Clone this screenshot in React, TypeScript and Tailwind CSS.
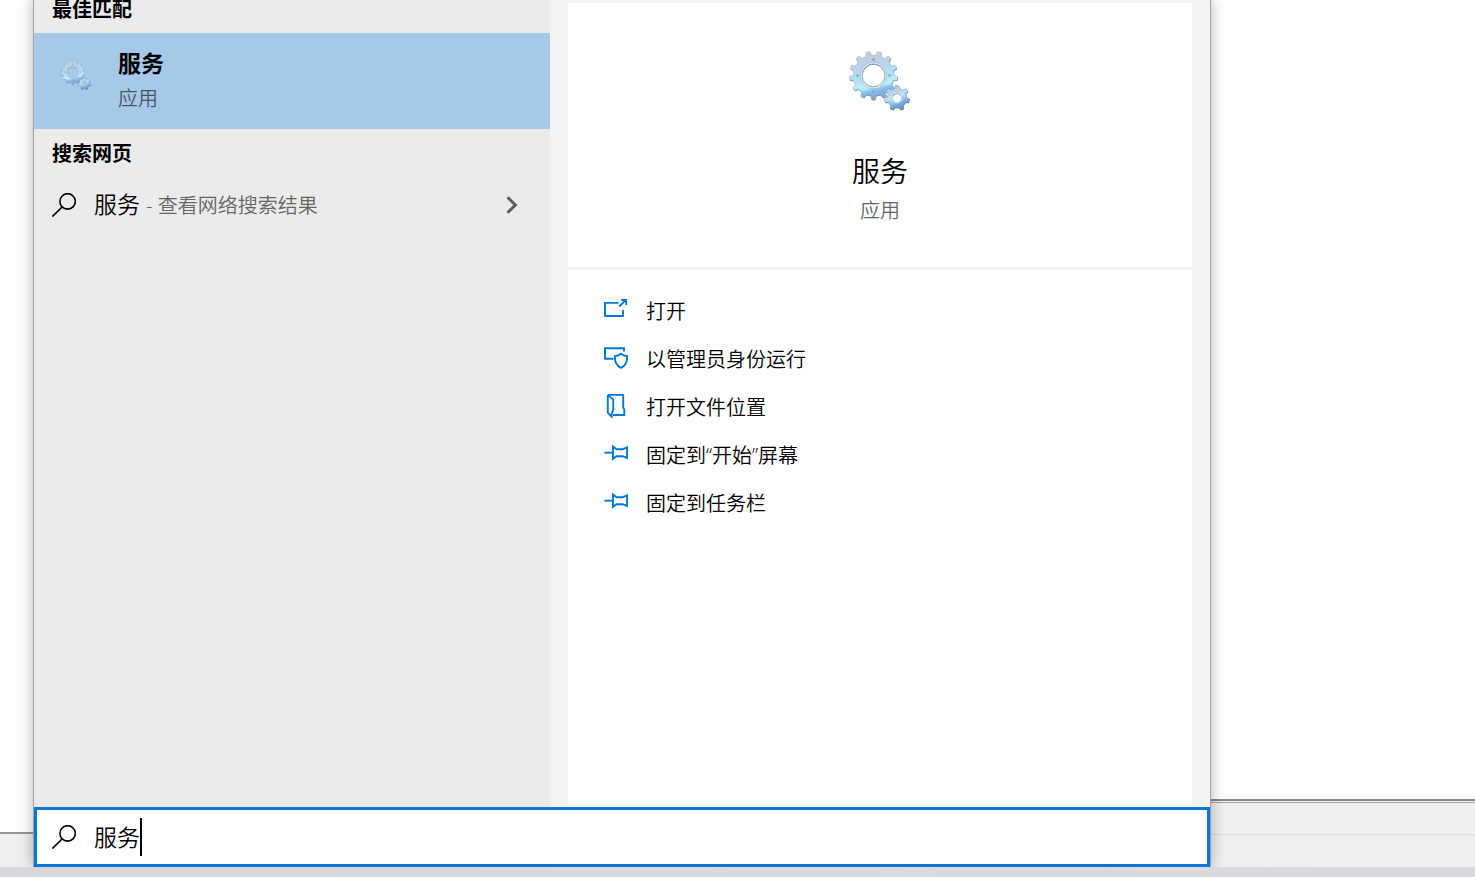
import React from "react";

type Gear = { cx: number; cy: number; outer: number; root: number; hole: number; teeth: number; turn: number };

function gearPath({ cx, cy, outer, root, hole, teeth, turn }: Gear): string {
  const step = (Math.PI * 2) / teeth;
  const at = (r: number, a: number) =>
    `${(cx + r * Math.cos(a)).toFixed(2)} ${(cy + r * Math.sin(a)).toFixed(2)}`;
  let d = "";
  for (let i = 0; i < teeth; i++) {
    const a = i * step + turn;
    d += `${i === 0 ? "M" : "L"}${at(root, a - step * 0.28)}L${at(outer, a - step * 0.16)}`;
    d += `A${outer} ${outer} 0 0 1 ${at(outer, a + step * 0.16)}L${at(root, a + step * 0.28)}`;
  }
  d += `ZM${cx + hole} ${cy}A${hole} ${hole} 0 1 0 ${cx - hole} ${cy}A${hole} ${hole} 0 1 0 ${cx + hole} ${cy}Z`;
  return d;
}

const bigGear = gearPath({ cx: 25.5, cy: 26.4, outer: 24.2, root: 20.4, hole: 11.4, teeth: 13, turn: Math.PI / 2 });
const smallGear = gearPath({ cx: 49, cy: 48.8, outer: 12.6, root: 9.8, hole: 4.6, teeth: 7, turn: -Math.PI / 2 });

function ServicesIcon({ id, className }: { id: string; className: string }) {
  return (
    <svg viewBox="0 0 64 64" className={className} aria-hidden="true">
      <defs>
        <linearGradient id={`${id}-big`} x1="0.35" y1="0" x2="0.6" y2="1">
          <stop offset="0" stopColor="#c3ccdc" />
          <stop offset="0.3" stopColor="#b9d3ec" />
          <stop offset="0.5" stopColor="#b0e0fa" />
          <stop offset="0.72" stopColor="#bdf0fd" />
          <stop offset="0.8" stopColor="#86bff0" />
          <stop offset="1" stopColor="#7e9fc8" />
        </linearGradient>
        <linearGradient id={`${id}-small`} x1="0.2" y1="0" x2="0.6" y2="1">
          <stop offset="0" stopColor="#b0bfd0" />
          <stop offset="0.5" stopColor="#bfe2f7" />
          <stop offset="0.75" stopColor="#7fb2e4" />
          <stop offset="1" stopColor="#6d8fb8" />
        </linearGradient>
      </defs>
      <path d={bigGear} transform="translate(0.3 0.8)" fill="#6f8599" fillRule="evenodd" />
      <path d={bigGear} fill={`url(#${id}-big)`} fillRule="evenodd" stroke="#93abc4" strokeWidth="0.4" />
      <circle cx="25.5" cy="26.4" r="12.4" fill="none" stroke="#dfeef7" strokeWidth="1.4" />
      <circle cx="25.5" cy="26.4" r="13.4" fill="none" stroke="#93adbf" strokeWidth="0.6" />
      <circle cx="25.5" cy="26.4" r="11.4" fill="none" stroke="#8aa2b2" strokeWidth="0.8" />
      <g fill="#7b9fba">
        <circle cx="25.5" cy="10.4" r="1.2" />
        <circle cx="25.5" cy="42.4" r="1.2" />
        <circle cx="9.5" cy="26.4" r="1.2" />
        <circle cx="41.5" cy="26.4" r="1.2" />
      </g>
      <path d={smallGear} transform="translate(0.2 0.8)" fill="#56708c" fillRule="evenodd" />
      <path d={smallGear} fill={`url(#${id}-small)`} fillRule="evenodd" stroke="#7391b2" strokeWidth="0.4" />
      <circle cx="49" cy="48.8" r="5" fill="none" stroke="#dcebf7" strokeWidth="1" />
    </svg>
  );
}

function SearchIcon() {
  return (
    <svg viewBox="0 0 24 24" className="size-6 shrink-0" fill="none" stroke="#000" strokeWidth="1.6" aria-hidden="true">
      <circle cx="15.6" cy="8.4" r="7.7" />
      <path d="M10.2 13.9L0.4 23.6" />
    </svg>
  );
}

const icons = {
  open: (
    <>
      <path d="M14.5 4.9H1V18H19V12" />
      <path d="M15.2 8.6L21.6 2.2M17.2 2H22.2V7" />
    </>
  ),
  admin: (
    <>
      <path d="M9.5 12.8H1V2.2H20V5.4" />
      <path d="M17 7.8C15.2 9.3 13.2 10 10.9 10.1C10.6 15.8 12.4 19.6 17 21.9C21.6 19.6 23.5 15.8 23.1 10.1C20.8 10 18.8 9.3 17 7.8Z" />
    </>
  ),
  folder: (
    <>
      <path d="M3.8 0.9H19.2V13.4L20.3 15.6V21H9" />
      <path d="M3.8 0.9V18.6L7.6 22.6V20.2L9.2 15.8V5.6L3.8 0.9" />
    </>
  ),
  pin: (
    <>
      <path d="M0.4 10.7H8.6" />
      <path d="M9 4.6L12.4 7.2H18.6L23 5.4V16L18.6 14.2H12.4L9 16.8Z" />
    </>
  ),
};

const actions: { icon: keyof typeof icons; label: string }[] = [
  { icon: "open", label: "打开" },
  { icon: "admin", label: "以管理员身份运行" },
  { icon: "folder", label: "打开文件位置" },
  { icon: "pin", label: "固定到“开始”屏幕" },
  { icon: "pin", label: "固定到任务栏" },
];

export default function App() {
  return (
    <div className="flex h-screen flex-col overflow-hidden bg-white font-['Open_Sans','Noto_Sans_CJK_SC',sans-serif] font-[350] text-black" lang="zh-CN">
      <div className="flex min-h-0 flex-1">
        <div className="flex w-[33px] shrink-0 flex-col">
          <div className="flex-1" />
          <div className="h-[35px] border-t-2 border-[#90969a] bg-[#efefef]" />
        </div>

        <main className="z-10 flex min-w-0 flex-1 flex-col border-x border-[#a3a3a3] shadow-[0_0_14px_rgba(0,0,0,0.3)]">
          <div className="flex min-h-0 flex-1 bg-[#f3f3f3]">
            <section className="w-[516px] shrink-0 overflow-hidden bg-[#ebebeb]">
              <h2 className="-mt-[15px] flex h-12 items-center px-[18px] pt-0.5 text-xl font-bold">最佳匹配</h2>
              <button type="button" className="flex h-24 w-full items-center bg-[#a6c9e7] pr-4 pl-[26px] text-left">
                <ServicesIcon id="result" className="-mt-3 size-8" />
                <span className="ml-[26px] flex flex-col gap-0.5 pt-0.5">
                  <span className="text-[23px] leading-8 font-bold">服务</span>
                  <span className="text-xl leading-9 text-[#465663]">应用</span>
                </span>
              </button>
              <h2 className="flex h-12 items-center px-[18px] pt-0.5 text-xl font-bold">搜索网页</h2>
              <button type="button" className="flex h-14 w-full items-center pr-8 pb-px pl-[18px] text-left">
                <SearchIcon />
                <span className="ml-[18px] text-[23px]">服务</span>
                <span className="ml-1.5 flex-1 pt-0.5 text-xl text-[#666666]">- 查看网络搜索结果</span>
                <svg viewBox="0 0 12 18" className="h-[18px] w-3" fill="none" stroke="#5c5c5c" strokeWidth="3" aria-hidden="true">
                  <path d="M1.5 1.2L9.3 9L1.5 16.8" />
                </svg>
              </button>
            </section>

            <section className="flex min-w-0 flex-1 flex-col gap-[3px] px-[18px] pt-[3px]">
              <div className="flex h-[264px] shrink-0 flex-col items-center bg-white pt-[46px]">
                <ServicesIcon id="detail" className="size-16" />
                <h1 className="mt-[38px] text-[28px] leading-10">服务</h1>
                <p className="mt-1 text-xl leading-8 text-[#666666]">应用</p>
              </div>
              <div className="min-h-0 flex-1 bg-white pt-[18px]">
                {actions.map(({ icon, label }) => (
                  <button key={label} type="button" className="flex h-12 w-full items-center gap-[18px] pl-9 text-left text-xl">
                    <svg viewBox="0 0 24 24" className="-mt-1 size-6 shrink-0" fill="none" stroke="#0078d7" strokeWidth="1.9" aria-hidden="true">
                      {icons[icon]}
                    </svg>
                    <span>{label}</span>
                  </button>
                ))}
              </div>
            </section>
          </div>

          <label className="flex h-[60px] shrink-0 items-center border-[3px] border-[#0078d7] bg-white pl-[15px]">
            <SearchIcon />
            <input
              type="text"
              aria-label="搜索"
              defaultValue="服务"
              className="ml-[18px] max-w-full [field-sizing:content] text-[23px] caret-transparent outline-none"
            />
            <span className="h-[38px] w-0.5 bg-black" aria-hidden="true" />
          </label>
        </main>

        <div className="flex w-[264px] shrink-0 flex-col">
          <div className="flex-1" />
          <div className="flex h-[68px] flex-col border-t-2 border-[#858a85] bg-[#efefef]">
            <div className="mt-px h-px bg-[#a8a8a8]" />
            <div className="h-8 border-b border-[#dcdcdc]" />
          </div>
        </div>
      </div>
      <div className="z-20 h-2.5 shrink-0 bg-linear-to-r from-[#d9d6dc] via-[#dcd8e0] to-[#d9d9dd]" />
    </div>
  );
}
